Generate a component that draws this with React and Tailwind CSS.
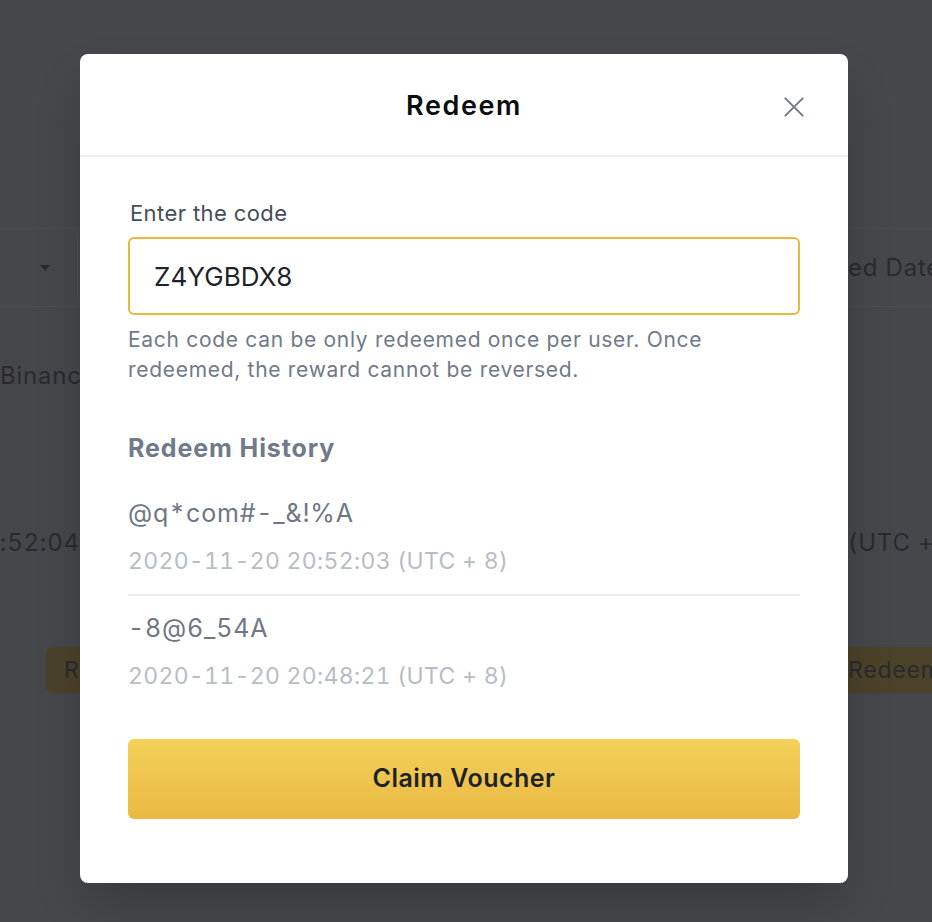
import React from 'react';

const history = [
  { code: '@q*com#-_&!%A', date: '2020-11-20 20:52:03 (UTC + 8)' },
  { code: '-8@6_54A', date: '2020-11-20 20:48:21 (UTC + 8)' },
];

const CloseIcon = () => (
  <svg width="26" height="26" viewBox="0 0 24 24" fill="none" stroke="#707a8a" strokeWidth="1.8" strokeLinecap="round">
    <path d="M4 4l16 16M20 4L4 20" />
  </svg>
);

// dimmed page behind the dialog
const Backdrop = () => (
  <div className="flex flex-col pt-[228px] text-[#2a2b2f] text-[24px] tracking-[0.8px] tabular-nums">
    <div className="flex h-[79px] border-y border-[#4c4d51]">
      <div className="w-[78px] h-full rounded-r-md border-r border-[#4c4d51] flex items-center justify-end pr-[26px]">
        <svg width="12" height="8" viewBox="0 0 12 8">
          <path d="M1 1h10L6 7z" fill="#2a2b2f" />
        </svg>
      </div>
      <div className="ml-auto w-[84px] overflow-hidden flex items-center">
        <span className="whitespace-nowrap">ed Date</span>
      </div>
    </div>
    <div className="flex h-[60px] mt-[39px] items-center">
      <span className="whitespace-nowrap">Binance</span>
    </div>
    <div className="flex h-[40px] mt-[117px] items-center">
      <div className="w-[80px] overflow-hidden whitespace-nowrap">:52:04 (UTC + 8)</div>
      <div className="ml-auto w-[84px] overflow-hidden whitespace-nowrap">(UTC + 8)</div>
    </div>
    <div className="flex h-[46px] mt-[84px] items-center text-[23px]">
      <div className="ml-[46px] w-[34px] h-full rounded-l-md bg-[#4a4229] flex items-center pl-[18px]">R</div>
      <div className="ml-auto w-[84px] h-full bg-[#4a4229] flex items-center whitespace-nowrap overflow-hidden">Redeem</div>
    </div>
  </div>
);

export default function App() {
  return (
    <div className="relative h-[922px] w-full overflow-hidden bg-[#46474b]" style={{ fontFamily: 'Inter, "Noto Sans", sans-serif' }}>
      <Backdrop />

      <div className="absolute inset-0 flex items-start pl-[80px] pt-[54px]">
        <div className="w-[768px] bg-white rounded-lg shadow-2xl">
          <div className="grid grid-cols-[1fr_auto_1fr] items-center h-[103px] border-b-2 border-[#eaecef]">
            <div />
            <h2 className="pt-[3px] text-[27px] font-semibold text-[#0b0e11] tracking-[1.6px]">Redeem</h2>
            <div className="flex justify-end pr-[41px] pt-[4px]">
              <CloseIcon />
            </div>
          </div>

          <div className="px-12 pt-[41px] pb-[64px]">
            <label className="block text-[22px] leading-[30px] text-[#474d57] pl-[2px] tracking-[0.4px]">Enter the code</label>
            <div className="mt-[9px] h-[78px] rounded-md border-2 border-[#e8b93a] flex items-center px-[24px]">
              <span className="text-[26px] text-[#1e2329] tracking-[0.1px]">Z4YGBDX8</span>
            </div>
            <p className="mt-[10px] text-[21px] leading-[30px] text-[#707a8a] tracking-[0.7px]">
              Each code can be only redeemed once per user. Once redeemed, the reward cannot be reversed.
            </p>

            <h3 className="mt-[47px] text-[25px] leading-[32px] font-bold text-[#707a8a] tracking-[0.9px]">Redeem History</h3>

            <div className="mt-[33px] flex flex-col tabular-nums">
              {history.map((item, i) => (
                <div key={item.code} className={i > 0 ? 'border-t-2 border-[#eaecef] pt-[16px]' : 'pb-[17px]'}>
                  <div className="text-[25px] leading-[32px] text-[#6f7786] tracking-[0.8px]">{item.code}</div>
                  <div className="mt-[16px] text-[23px] leading-[32px] text-[#b7bdc6] tracking-[0.3px]">{item.date}</div>
                </div>
              ))}
            </div>

            <button className="mt-[47px] w-full h-[80px] rounded-md bg-gradient-to-b from-[#f3d15a] to-[#e9b842] text-[25px] font-semibold text-[#1e2329] tracking-[0.5px]">
              Claim Voucher
            </button>
          </div>
        </div>
      </div>
    </div>
  );
}
